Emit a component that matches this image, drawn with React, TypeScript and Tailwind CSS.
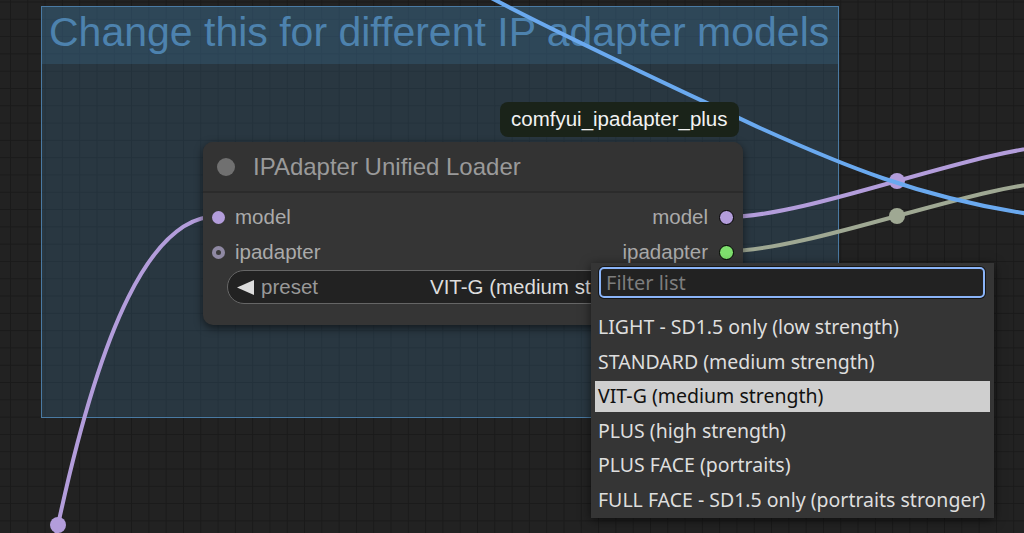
const presets = [
  'LIGHT - SD1.5 only (low strength)',
  'STANDARD (medium strength)',
  'VIT-G (medium strength)',
  'PLUS (high strength)',
  'PLUS FACE (portraits)',
  'FULL FACE - SD1.5 only (portraits stronger)',
];

function Slot({ color, hollow }: { color: string; hollow?: boolean }) {
  if (hollow) {
    return (
      <span className="w-[13px] h-[13px] rounded-full bg-[#8f89a3] flex items-center justify-center flex-shrink-0">
        <span className="w-[5px] h-[5px] rounded-full bg-[#3a3a3a]" />
      </span>
    );
  }
  return <span className={`w-[13px] h-[13px] rounded-full flex-shrink-0 ${color}`} />;
}

function Links() {
  return (
    <svg className="absolute inset-0 pointer-events-none" width="1024" height="533" viewBox="0 0 1024 533" fill="none">
      {/* model -> off canvas below */}
      <path d="M 218 216 C 150 216, 100 330, 58 525 L 53 552" stroke="#b39ddb" strokeWidth="4" />
      <circle cx="58" cy="525" r="8" fill="#b39ddb" />
      {/* model out */}
      <path d="M 727 217 C 812 217, 982 145, 1067 145" stroke="#b39ddb" strokeWidth="4" />
      <circle cx="897" cy="181" r="8" fill="#b39ddb" />
      {/* ipadapter out */}
      <path d="M 727 251 C 812 251, 982 181, 1067 181" stroke="#9fa893" strokeWidth="4" />
      <circle cx="897" cy="216" r="8" fill="#9fa893" />
      {/* clip vision link passing through */}
      <path d="M 480 -8 C 560 35, 680 90, 760 128 C 840 164, 920 198, 1030 214" stroke="#6aa9ef" strokeWidth="4" />
    </svg>
  );
}

export default function App() {
  return (
    <div className="relative w-[1024px] h-[533px] overflow-hidden bg-[#222222] bg-[linear-gradient(to_right,#1a1a1a_1px,transparent_1px),linear-gradient(to_bottom,#1a1a1a_1px,transparent_1px)] bg-[size:17.3px_17.3px] bg-[position:10px_1.5px] font-['Liberation_Sans',Arial,sans-serif] select-none">
      {/* Group */}
      <div className="absolute left-[41px] top-[6px] w-[798px] h-[412px] border border-[#4a7aa3] bg-[#3f789e]/25">
        <div className="h-[57px] bg-[#3f789e]/25 pl-[7px] pt-[5px]">
          <span className="text-[41px] leading-[41px] text-[#4d82ae] whitespace-nowrap">
            Change this for different IP adapter models
          </span>
        </div>
      </div>

      <Links />

      {/* Node */}
      <div className="absolute left-[203px] top-[142px] w-[540px] h-[183px] rounded-[10px] bg-[#353535] shadow-[0_3px_8px_rgba(0,0,0,0.55)] flex flex-col">
        <div className="h-[51px] flex items-center pl-[14px] gap-[18px] border-b-2 border-[#2b2b2b] rounded-t-[10px] bg-[#333333]">
          <span className="w-[18px] h-[18px] rounded-full bg-[#707070]" />
          <span className="text-[24px] text-[#9a9a9a] whitespace-nowrap">IPAdapter Unified Loader</span>
        </div>

        <div className="flex flex-col pt-[7px] pl-[8.5px] pr-[9.5px]">
          <div className="h-[35px] flex items-center justify-between">
            <div className="flex items-center gap-[10.5px]">
              <Slot color="bg-[#b39ddb]" />
              <span className="text-[20.5px] text-[#aaaaaa]">model</span>
            </div>
            <div className="flex items-center gap-[10.5px]">
              <span className="text-[20.5px] text-[#aaaaaa]">model</span>
              <span className="w-[15px] h-[15px] rounded-full bg-[#b39ddb] border-[1.5px] border-black" />
            </div>
          </div>
          <div className="h-[35px] flex items-center justify-between">
            <div className="flex items-center gap-[10.5px]">
              <Slot color="" hollow />
              <span className="text-[20.5px] text-[#aaaaaa]">ipadapter</span>
            </div>
            <div className="flex items-center gap-[10.5px]">
              <span className="text-[20.5px] text-[#aaaaaa]">ipadapter</span>
              <span className="w-[15px] h-[15px] rounded-full bg-[#7fe06e] border-[1.5px] border-black" />
            </div>
          </div>
        </div>

        {/* combo widget */}
        <div className="mx-[24px] mt-[0px] h-[34px] rounded-full border border-[#666666] bg-[#222222] flex items-center pl-[9px] pr-[10px] text-[20.5px] whitespace-nowrap">
          <svg width="17" height="15" viewBox="0 0 17 15" className="flex-shrink-0">
            <polygon points="0,7.5 17,0 17,15" fill="#dddddd" />
          </svg>
          <span className="ml-[7px] text-[#999999]">preset</span>
          <span className="ml-[112px] text-[#dddddd]">VIT-G (medium strength)</span>
          <svg width="17" height="15" viewBox="0 0 17 15" className="ml-auto flex-shrink-0">
            <polygon points="17,7.5 0,0 0,15" fill="#dddddd" />
          </svg>
        </div>
      </div>

      {/* Tooltip */}
      <div className="absolute left-[500px] top-[102px] w-[239px] h-[35px] rounded-[8px] bg-[#1a2319] flex items-center px-[11px]">
        <span className="text-[20.5px] text-[#f2f2f2] whitespace-nowrap">comfyui_ipadapter_plus</span>
      </div>

      {/* Dropdown */}
      <div className="absolute left-[591px] top-[263px] w-[403px] h-[255px] bg-[#353535] shadow-[0_2px_10px_rgba(0,0,0,0.6)] flex flex-col font-['Noto_Sans',sans-serif]">
        <div className="mt-[4px] ml-[8px] w-[386px] h-[31px] rounded-[5px] border-2 border-[#8ab4f8] bg-[#222222] ring-1 ring-black/60 flex items-center pl-[5px]">
          <span className="text-[20px] text-[#7d7d7d] leading-none">Filter list</span>
        </div>
        <div className="mt-[13.5px] flex flex-col gap-[3.5px]">
          {presets.map((p) => {
            const active = p.startsWith('VIT-G');
            return (
              <div
                key={p}
                className={`h-[31px] mx-[4px] pl-[3px] flex items-center text-[19.5px] whitespace-nowrap ${
                  active ? 'bg-[#cfcfcf] text-[#111111]' : 'text-[#dedede]'
                }`}
              >
                {p}
              </div>
            );
          })}
        </div>
      </div>
    </div>
  );
}
